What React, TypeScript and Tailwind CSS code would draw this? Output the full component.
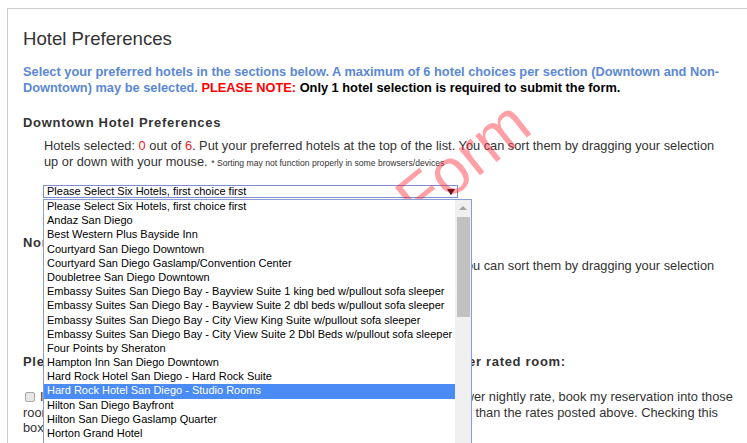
import React from 'react'

const hotels = [
  'Please Select Six Hotels, first choice first',
  'Andaz San Diego',
  'Best Western Plus Bayside Inn',
  'Courtyard San Diego Downtown',
  'Courtyard San Diego Gaslamp/Convention Center',
  'Doubletree San Diego Downtown',
  'Embassy Suites San Diego Bay - Bayview Suite 1 king bed w/pullout sofa sleeper',
  'Embassy Suites San Diego Bay - Bayview Suite 2 dbl beds w/pullout sofa sleeper',
  'Embassy Suites San Diego Bay - City View King Suite w/pullout sofa sleeper',
  'Embassy Suites San Diego Bay - City View Suite 2 Dbl Beds w/pullout sofa sleeper',
  'Four Points by Sheraton',
  'Hampton Inn San Diego Downtown',
  'Hard Rock Hotel San Diego - Hard Rock Suite',
  'Hard Rock Hotel San Diego - Studio Rooms',
  'Hilton San Diego Bayfront',
  'Hilton San Diego Gaslamp Quarter',
  'Horton Grand Hotel',
  'Hotel Indigo San Diego Gaslamp Quarter',
  'Hyatt Regency Mission Bay',
]

const highlighted = 13

function FakeSelect({ open }: { open?: boolean }) {
  return (
    <div className="relative">
      <div className="ml-[20px] flex h-[13px] w-[415px] items-center justify-between border border-[#7d8fcf] bg-white pl-[3px] pr-[2px] text-[11px] leading-[11px] text-black">
        <span>Please Select Six Hotels, first choice first</span>
        {/* little black triangle */}
        <svg width="8" height="6" viewBox="0 0 8 6">
          <path d="M0 0h8L4 6z" fill="#000" />
        </svg>
      </div>
      {open && <HotelDropdown />}
    </div>
  )
}

function HotelDropdown() {
  return (
    <div className="absolute left-[20px] top-[14px] z-20 flex h-[260px] w-[429px] border border-[#8b9bd6] bg-white">
      <ul className="flex-1 text-[11px] text-black">
        {hotels.map((h, i) => (
          <li
            key={h}
            className={
              i === highlighted
                ? 'h-[14.2px] whitespace-nowrap bg-[#4a8bf5] pl-[3px] leading-[13px] text-white'
                : 'h-[14.2px] whitespace-nowrap pl-[3px] leading-[13px]'
            }
          >
            {h}
          </li>
        ))}
      </ul>
      {/* scrollbar */}
      <div className="flex w-[16px] flex-col items-center bg-[#f0f0f0]">
        <svg className="mt-[6px]" width="8" height="4" viewBox="0 0 8 4">
          <path d="M0 4L4 0l4 4z" fill="#a3a3a3" />
        </svg>
        <div className="mt-[7px] h-[100px] w-[13px] bg-[#c1c1c1]" />
      </div>
    </div>
  )
}

function PrefSection({ title, open }: { title: string; open?: boolean }) {
  return (
    <div>
      <h2 className="text-[13px] font-bold leading-4 tracking-[0.7px] text-[#333]">{title}</h2>
      <p className="ml-[21px] mr-[10px] mt-[7px] text-[12.8px] leading-4 text-[#333]">
        Hotels selected: <span className="text-[#e8212b]">0</span> out of{' '}
        <span className="text-[#e8212b]">6</span>. Put your preferred hotels at the top of the list. You can
        sort them by dragging your selection up or down with your mouse.{' '}
        <span className="text-[8.6px]">* Sorting may not function properly in some browsers/devices</span>
      </p>
      <div className="mt-[14px]">
        <FakeSelect open={open} />
      </div>
    </div>
  )
}

export default function App() {
  return (
    <div className="relative h-[443px] overflow-hidden bg-white font-['Liberation_Sans',Arial,sans-serif] text-[#333]">
      <div className="ml-[7px] mt-2 w-[744px] border border-[#cccccc] px-[15px] pb-10 pt-[19px]">
        <h1 className="text-[18.6px] leading-[21px] text-[#333]">Hotel Preferences</h1>
        <p className="mt-[15px] text-[12.8px] font-bold leading-4 text-[#5b88d4]">
          Select your preferred hotels in the sections below. A maximum of 6 hotel choices per section (Downtown
          and Non-Downtown) may be selected. <span className="text-[#ff0000]">PLEASE NOTE:</span>{' '}
          <span className="text-black">Only 1 hotel selection is required to submit the form.</span>
        </p>

        <div className="mt-[19px]">
          <PrefSection title="Downtown Hotel Preferences" open />
        </div>

        <div className="mt-[37px]">
          <PrefSection title="Non-Downtown Hotel Preferences" />
        </div>

        <h2 className="mt-[36px] text-[13px] font-bold leading-4 tracking-[0.7px] text-[#333]">
          Please check this box if you would also be willing to book a higher rated room:
        </h2>
        <p className="mt-[19px] text-[12.8px] leading-[15.6px] text-[#333]">
          <span className="ml-[2px] mr-[5px] inline-block h-[10px] w-[10px] rounded-[2px] border border-[#a9a9a9] bg-[#e6e6e6] align-[-1px]" />
          If my preferred hotels are sold out or not available at the quoted rate or a lower nightly rate, book my
          reservation into those rooms that remain available, even when those room rates are somewhat higher than the
          rates posted above. Checking this box authorizes the housing bureau to make that change for me.
        </p>
      </div>

      {/* watermark */}
      <span className="pointer-events-none absolute left-[388px] top-[129px] z-10 rotate-[-39deg] text-[64px] leading-[64px] text-[#ff2d3c]/45">
        Form
      </span>
    </div>
  )
}
